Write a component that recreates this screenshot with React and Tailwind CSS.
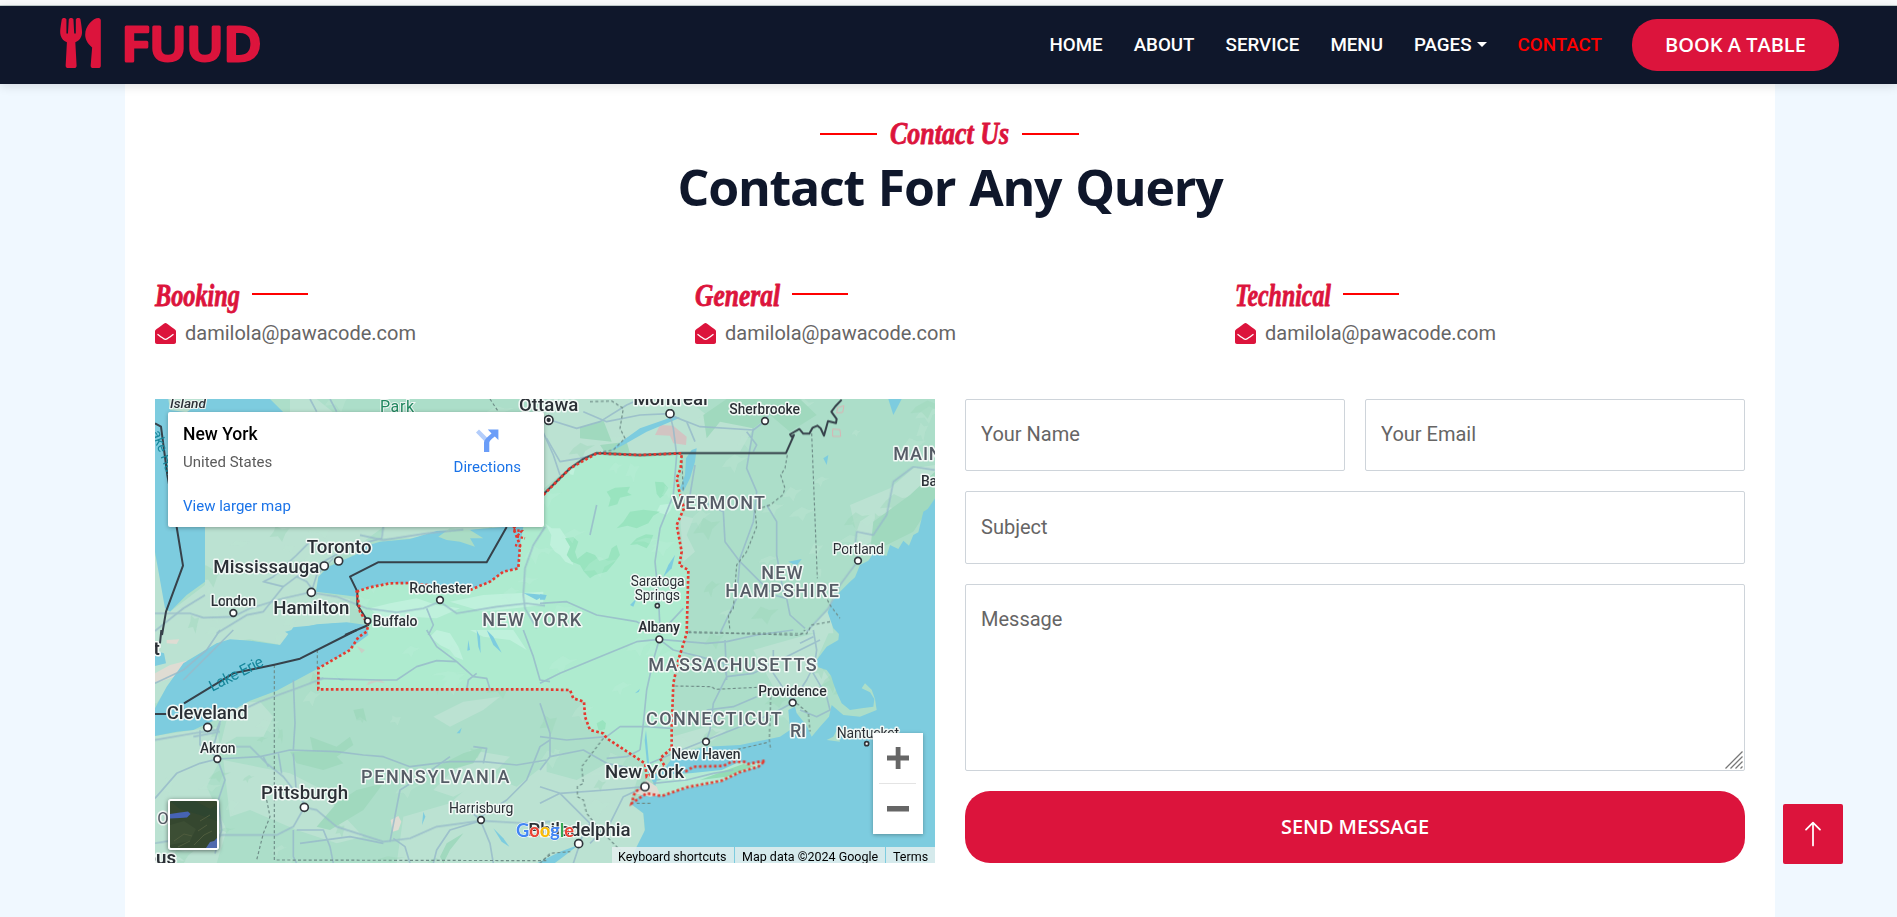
import React from "react";
import { FaUtensils, FaEnvelopeOpen } from "react-icons/fa";
import { BsArrowUp } from "react-icons/bs";

/* The map is drawn on four tiles; each tile has its own origin. */
const TILES = { a: [-15, -12], b: [1155, -12], c: [-15, 693], d: [1155, 693] };
const tile = (k) => `translate(${TILES[k][0]} ${TILES[k][1]})`;

const NY =
  "M605 578L640 566 705 553 760 552 815 558 880 566 945 573 1005 548 1045 518 1090 508 1095 438 1075 388 1120 340 1167 286 1245 208 1325 163 1455 168 1580 163 1577 208 1565 238 1573 278 1587 328 1565 378 1580 458 1573 498 1600 513 1595 703 1570 783 1555 853 1550 983 1550 1048 1515 1078 1530 1103 1475 1133 1470 1093 1355 1018 1345 1003 1305 993 1290 953 1287 908 1255 898 1245 873 1155 871 490 871 490 808 585 753 610 715 635 698 640 678 615 638Z";
const ATLANTIC =
  "M2340 298L2318 330 2305 338 2290 400 2275 408 2262 440 2245 425 2230 450 2205 438 2195 470 2155 463 2140 485 2115 498 2100 535 2085 548 2055 578 2030 610 2018 640 2035 688 2052 705 2050 723 2015 743 1985 783 1990 805 2015 813 2028 830 2035 853 2045 880 2060 913 2085 933 2120 928 2155 923 2158 900 2145 880 2120 868 2130 853 2150 872 2160 900 2165 933 2115 953 2065 948 2030 918 2022 953 1995 983 1970 1013 1955 980 1925 943 1920 923 1900 933 1905 993 1875 1013 1755 1038 1655 1043 1600 1055 1555 1073 1525 1113 1485 1133 1500 1160 1425 1213 1465 1243 1470 1293 1445 1343 1415 1413 2340 1413Z";

const PLAINS = [
  ["a", "M165 396L700 396 640 440 520 520 495 590 600 612 600 684 400 708 100 740 15 740 15 480 60 650 165 570Z"],
  ["a", "M700 396L1090 396 1000 400 880 420 780 430 690 430Z"],
  ["a", "M15 12L300 12 420 60 420 12 500 12 560 60 15 60Z"],
  ["b", "M0 12L440 12 500 60 640 100 600 170 430 172 300 180 170 172 60 240 0 290Z"],
  ["c", "M15 0L420 0 400 46 300 28 200 40 100 100 20 220 15 220Z"],
  ["c", "M15 318L130 300 200 290 215 380 170 470 230 600 200 700 15 700Z"],
  ["c", "M235 220L330 215 370 260 340 320 260 320 210 350 230 270Z"],
  ["c", "M220 390L420 430 500 470 640 620 560 640 440 600 300 540 240 560Z"],
  ["c", "M760 560L900 520 1000 430 1100 470 1190 400 1190 700 740 700Z"],
  ["c", "M850 480L930 400 960 360 1080 380 1010 450 910 500Z"],
  ["c", "M850 260L940 215 1050 200 1000 240 900 290Z"],
  ["d", "M0 420L110 450 200 400 300 420 270 520 310 550 315 620 260 700 0 700Z"],
  ["d", "M330 340L500 290 560 300 500 345 400 370Z"],
  ["d", "M640 60L780 20 870 0 830 90 870 150 790 200 700 170Z"],
  ["b", "M900 620L930 560 870 640 880 715 790 715 860 650Z"],
  ["b", "M930 330L1050 280 1120 220 1185 210 1185 280 1100 330 1030 420 960 460Z"],
  ["b", "M420 360L460 370 440 420 465 470 430 500Z"],
];

const FORESTS = [
  ["b", "M560 12L780 12 830 60 750 110 690 60 640 100 540 80 500 130 490 60Z"],
  ["b", "M120 96L190 76 215 140 120 130Z"],
  ["b", "M180 150L260 140 270 175 200 180Z"],
  ["b", "M1000 380L1110 300 1185 230 1185 310 1120 410 1040 450 990 470Z"],
  ["c", "M480 320L560 350 600 320 610 345 560 380 490 370Z"],
  ["c", "M420 365L540 360 580 400 520 420 440 400Z"],
  ["c", "M860 410L940 370 1000 350 970 400 900 420Z"],
  ["c", "M890 640L940 610 900 660 880 700 870 680Z"],
  ["c", "M610 240L640 235 650 275 630 260 620 270Z"],
  ["c", "M560 520L620 480 700 460 640 540 540 600 500 590Z"],
];

const NY_PATCHES = [
  ["b", "M200 290L225 278 270 275 262 292 275 300 240 308 232 328 205 335 212 310Z"],
  ["b", "M75 430L100 426 115 440 105 470 112 492 140 470 165 480 178 498 205 490 215 460 230 450 240 480 222 505 200 530 165 540 150 550 132 530 120 510 95 500 80 480 90 455Z"],
  ["b", "M270 350L310 344 360 350 340 362 325 385 290 400 262 392 230 400 250 380Z"],
  ["b", "M345 260L370 262 385 280 372 300 360 310 350 296Z"],
  ["b", "M290 430L318 418 340 420 330 444 320 460 292 448 270 450Z"],
  ["d", "M170 280L188 270 198 280 195 298 176 302Z"],
];
const NY_LIGHT = [
  ["b", "M15 385L35 400 60 400 80 430 110 450 90 470 100 510 76 500 60 480 45 470 30 450 34 420Z"],
  ["b", "M85 225L105 220 100 240 90 238Z"],
  ["b", "M360 330L400 325 392 345 380 360 350 350Z"],
  ["a", "M1000 600L1180 590 1180 630 1000 650 900 620Z"],
  ["c", "M860 0L900 10 925 50 940 90 915 80 900 60 870 45 840 20Z"],
  ["c", "M960 0L1090 0 1130 60 1080 30 1000 20Z"],
  ["a", "M660 640L720 625 800 610 860 630 930 640 860 670 780 665 700 680Z"],
];

const LAKES = [
  ["a", "M15 12L55 12 60 45 110 52 165 12 360 12 400 52 400 200 165 396 165 560 110 600 60 650 45 640 15 470Z"],
  ["a", "M498 590L505 545 535 515 580 495 620 478 640 455 690 440 780 432 860 408 960 404 1060 396 1180 300 1120 396 1110 450 1105 520 1060 530 1020 560 960 583 830 570 720 563 625 585 620 605 560 598Z"],
  ["a", "M405 710L500 688 590 682 650 690 655 720 560 790 390 760 420 720Z"],
  ["c", "M15 318L15 235 50 170 100 100 200 40 240 28 300 32 390 45 430 -8 560 -20 655 -5 600 55 500 118 440 150 380 182 300 212 200 268 130 300 80 305Z"],
  ["c", "M15 62L42 70 48 100 15 108Z"],
  ["b", "M455 165L470 160 465 200 450 250 430 290 420 280 435 240 438 190Z"],
  ["b", "M230 150L300 100 380 72 400 62 420 68 320 110 250 150 210 170Z"],
  ["b", "M0 598L20 600 15 614 0 614Z"],
  ["b", "M405 480L395 520 370 545 385 510Z"],
  ["b", "M270 630L290 610 280 635Z"],
  ["b", "M1045 12L1085 12 1060 60Z"],
  ["b", "M850 190L865 180 860 210Z"],
  ["b", "M745 500L785 492 770 512Z"],
  ["c", "M980 0L985 50 992 70 990 20Z"],
  ["c", "M1010 0L1030 45 1055 68 1030 20Z"],
  ["c", "M550 122L565 145 585 152 568 150Z"],
  ["c", "M955 30L960 60 952 62Z"],
  ["c", "M1030 595L1055 635 1078 650 1060 625Z"],
  ["c", "M820 545L826 560 816 585Z"],
  ["c", "M920 310L935 293 930 310Z"],
  ["a", "M1120 594L1185 600 1160 615Z"],
  ["d", "M318 300L330 430 324 430 314 330Z"],
  ["d", "M285 190L300 176 296 186Z"],
  ["d", "M-10 700L60 665 115 645 70 680 30 710Z"],
];

const ROADS = [
  ["a", "M15 655L120 655 160 668 250 665 300 640 400 610 480 592 560 605 650 640 740 652 820 640 870 620 920 655 1040 635 1130 625 1185 632"],
  ["a", "M700 396L695 430 600 455 520 500 440 545 400 575 340 560 370 545 440 480 480 440"],
  ["a", "M15 708L100 640 165 600M400 575L340 650 290 660 200 715M484 592L500 540 550 490M500 600L470 560 440 545"],
  ["a", "M1185 396L1150 450 1125 520 1120 600 1125 640 1160 700"],
  ["a", "M830 640L850 690 835 720M540 12L560 50M480 12L500 50"],
  ["a", "M630 420L700 435 830 415 940 404"],
  ["b", "M0 90L40 180 60 240M30 75L110 100 180 80 260 30 300 12M130 50L200 80 300 60 390 56M390 60L400 100 410 180 400 300 360 400 345 500 355 600 360 700"],
  ["b", "M390 60L440 80 465 140M390 60L480 95 640 105 675 78 700 30M620 110L650 150 640 170M640 100L620 220 650 290 640 380 600 490 590 610 540 715"],
  ["b", "M465 210L450 300 550 350 555 440 600 500 660 560 700 600 740 610 750 660 795 700M680 330L710 380 710 480 730 590"],
  ["b", "M1185 225L1120 215 1060 260 1040 360 1000 420 950 410 945 450 954 497 900 570 865 640 800 710"],
  ["b", "M20 130L60 200 120 190 200 170M0 625L80 620 170 660 290 680 360 715M170 330L150 420M360 715L430 640"],
  ["c", "M430 150L435 280 430 360M15 330L130 310 200 300 212 270 330 215 440 175 520 145M130 320L210 305M150 300L150 345 200 380M210 280L190 350"],
  ["c", "M15 505L80 430 150 400 202 387 330 380 420 360 560 365 640 375 700 380 780 410 900 395 1000 395 1100 405 1190 390"],
  ["c", "M202 387L225 450 205 510 215 600 195 670M230 350L300 350 350 400 400 440 463 520M340 380L355 410M385 370L395 430M430 370L440 500"],
  ["c", "M15 640L130 620 220 615 380 615 430 590 463 532 500 540 560 590 700 635 780 625 860 590 993 572 1130 580 1200 575"],
  ["c", "M430 600L430 680 440 700M440 600L520 600 540 650 550 700M720 635L750 480 830 430 900 380M993 575L1020 640 1030 700M993 572L900 600 860 660 850 700M993 560L1070 510 1130 450 1170 350 1200 330M730 625L765 650 780 700"],
  ["c", "M505 145L600 148 690 150 740 150 800 110 860 92 920 95 970 140 1010 145 1020 178M830 0L860 50 920 95M1120 0L1150 80 1170 150 1200 155M950 180L955 150 980 130M970 350L1010 355 1000 400"],
  ["c", "M15 160L100 120 170 60 210 0M100 150L180 70 250 0M450 640L600 620 700 640M993 570L930 520"],
  ["d", "M0 160L60 130 180 80 290 35 358 28 500 40 560 35 650 15 760 0M358 28L340 90 320 180 310 280 300 360M358 28L400 60 480 80 550 100 560 140 520 220 510 300 498 335M555 30L560 150"],
  ["d", "M560 140L640 130 700 100 780 60 840 30M700 60L700 130 740 190 758 218 700 250 600 290 500 330 400 370 330 400M820 0L830 60 820 130 860 200 870 240 830 260 780 240M760 210L800 150 830 90M780 40L820 20"],
  ["d", "M0 320L80 330 200 320 240 290 320 290 395 295M0 220L30 310 30 380 0 420M30 380L130 360 200 400 300 420M0 520L60 490 200 480 315 470M60 490L150 580 116 640M315 470L250 500 210 580 150 640M0 470L60 490 110 540M300 360L260 380 200 385M120 640L100 700M500 240L580 230 650 200"],
  ["d", "M340 460L440 450 520 430 580 420M350 450L400 440"],
];

const DASHED = [
  ["a", "M1020 12L1045 50"],
  ["b", "M150 20L215 18 250 40 240 100 255 130 220 165 180 172M742 180L735 220 722 240 735 280 728 300 690 330 645 345 650 395 620 470 590 510 580 640 565 660 570 708M815 115L832 550M855 600L870 630 900 670M445 710L570 714 800 716 815 690 870 680M425 180L430 290"],
  ["c", "M373 105L373 690 1190 692M502 60L502 115M350 510L360 560 340 610 320 690M1180 690L1200 675"],
  ["d", "M445 8L570 10 780 16 795 0M405 168L515 170 525 178 650 172M692 200L688 330 692 360M680 338L520 375M770 220L805 250 810 305M190 325L125 410 130 460 112 470 112 500 130 510 140 550 180 600 240 660M0 700L30 670 90 665M290 520L335 520"],
];

const BORDERS = [
  ["a", "M15 85L33 95 52 240 80 396 99 512 48 650 36 720M1070 396L1010 502 684 502 600 545 622 590 622 630 653 678 655 690 585 720"],
  ["b", "M10 298L90 220 130 192 170 174 300 180 425 174 738 174 762 120 755 125 750 118 778 102 790 116 808 116 818 98 832 92 842 100 852 122 864 78 888 84 890 72 874 50 886 34 905 14"],
  ["c", "M34 0L30 40M620 0L450 86 373 104 250 130 102 220M15 252L50 252"],
];

/* [tile, text, x, baseline, width, size, weight, color] */
const INK = "#2b3036";
const STATE = "#565c66";
const LABELS = [
  ["a", "Toronto", 470, 473, 195, 56, 500, INK],
  ["a", "Mississauga", 190, 533, 318, 56, 500, INK],
  ["a", "Hamilton", 370, 657, 228, 56, 500, INK],
  ["a", "London", 182, 634, 136, 42, 500, INK],
  ["a", "Rochester", 778, 594, 186, 42, 500, INK],
  ["a", "Buffalo", 668, 694, 134, 42, 500, INK],
  ["a", "NEW YORK", 997, 692, 296, 54, 500, STATE],
  ["a", "Ottawa", 1107, 47, 178, 56, 500, INK],
  ["b", "Montreal", 280, 29, 223, 56, 500, INK],
  ["b", "Sherbrooke", 568, 58, 212, 42, 500, INK],
  ["b", "VERMONT", 397, 342, 278, 54, 500, STATE],
  ["b", "MAINE", 1060, 195, 178, 54, 500, STATE],
  ["b", "Bangor", 1143, 272, 130, 42, 500, INK],
  ["b", "Portland", 878, 476, 154, 42, 400, INK],
  ["b", "NEW", 664, 551, 124, 54, 500, STATE],
  ["b", "HAMPSHIRE", 556, 605, 341, 54, 500, STATE],
  ["b", "Saratoga", 272, 573, 162, 42, 400, INK],
  ["b", "Springs", 284, 614, 136, 42, 400, INK],
  ["b", "Albany", 295, 712, 125, 42, 600, INK],
  ["c", "Cleveland", 50, 266, 243, 56, 500, INK],
  ["c", "Akron", 150, 368, 107, 42, 500, INK],
  ["c", "Pittsburgh", 333, 508, 261, 56, 500, INK],
  ["c", "PENNSYLVANIA", 633, 459, 445, 54, 500, STATE],
  ["c", "Harrisburg", 897, 549, 193, 42, 400, INK],
  ["c", "O", 22, 583, 32, 50, 400, STATE],
  ["d", "MASSACHUSETTS", 325, 122, 505, 54, 500, STATE],
  ["d", "CONNECTICUT", 318, 286, 407, 54, 500, STATE],
  ["d", "RI", 750, 320, 48, 54, 500, STATE],
  ["d", "Providence", 655, 199, 205, 42, 500, INK],
  ["d", "Nantucket", 890, 324, 187, 42, 400, INK],
  ["d", "New Haven", 394, 387, 208, 42, 500, INK],
  ["d", "New York", 195, 445, 238, 56, 500, INK],
  ["d", "Philadelphia", -35, 617, 307, 56, 500, INK],
];

const CITIES = [
  ["a", 566, 498, 12], ["a", 523, 513, 12], ["a", 484, 592, 12], ["a", 250, 654, 10], ["a", 870, 615, 10],
  ["a", 653, 678, 9], ["b", 390, 56, 12], ["b", 675, 78, 10], ["b", 954, 497, 10], ["b", 352, 632, 6],
  ["c", 173, 292, 12], ["c", 202, 387, 10], ["c", 463, 532, 12], ["c", 993, 570, 10], ["d", 358, 28, 10],
  ["d", 116, 641, 12], ["d", 315, 470, 12], ["d", 498, 335, 10], ["d", 758, 218, 10], ["d", 980, 341, 6],
];

/* Small irregular vegetation flecks, the same on every render. */
function flecks(count, seed) {
  let s = seed;
  const r = () => ((s = (s * 16807) % 2147483647) / 2147483647);
  const out = [];
  for (let i = 0; i < count; i++) {
    const cx = r() * 2340;
    const cy = r() * 1392;
    const w = 10 + r() * 34;
    const h = 8 + r() * 26;
    const sl = (r() - 0.3) * 30;
    out.push(
      `M${cx - w} ${cy + h * 0.4}L${cx - w * 0.6} ${cy - h * 0.3}L${cx - w * 0.3 + sl} ${cy - h}L${cx + w * 0.3 + sl} ${cy - h * 0.6}L${cx + w + sl} ${cy - h * 0.7}L${cx + w * 0.5} ${cy}L${cx + w * 0.2} ${cy + h}L${cx - w * 0.2} ${cy + h * 0.3}Z`
    );
  }
  return out.join("");
}
const LIGHT_FLECKS = flecks(130, 7717);
const DARK_FLECKS = flecks(70, 4211);

function Shapes({ list, ...rest }) {
  return (
    <g {...rest}>
      {list.map(([k, d], i) => (
        <path key={i} transform={tile(k)} d={d} />
      ))}
    </g>
  );
}

function MapArt() {
  return (
    <svg viewBox="0 0 2340 1392" className="block h-full w-full font-['Roboto',sans-serif]" preserveAspectRatio="none">
      <defs>
        <clipPath id="ny"><path d={NY} /></clipPath>
      </defs>
      <rect width="2340" height="1392" fill="#acdec9" />
      <Shapes list={PLAINS} fill="#bbe2d2" />
      <path d={LIGHT_FLECKS} fill="#bce4d3" opacity=".45" />
      <path d={DARK_FLECKS} fill="#9bd6ba" opacity=".4" />
      <Shapes list={FORESTS} fill="#a0d9be" />
      <path d={NY} fill="#aeebcf" />
      <g clipPath="url(#ny)">
        <Shapes list={NY_LIGHT} fill="#bff1dc" />
        <Shapes list={NY_PATCHES} fill="#99e4bf" />
        <path d={LIGHT_FLECKS} fill="#bff1dc" opacity=".25" />
      </g>
      <g fill="#d2c4c2">
        <path transform={tile("b")} d="M345 120L360 90 400 92 415 105 440 125 438 150 400 145 390 122Z" />
        <path transform={tile("c")} fill="#dfdcd3" d="M15 130L60 105 110 92 120 105 90 135 30 155 15 155ZM50 30L88 28 80 42 50 40ZM722 570L745 558 754 575 745 600 728 605Z" />
        <path transform={tile("c")} d="M620 48L645 60 635 70ZM655 155L690 148 705 160 680 155 650 166Z" opacity=".7" />
      </g>
      <Shapes list={LAKES} fill="#7dccdf" />
      <path d={ATLANTIC} fill="#7dccdf" />
      <g transform={tile("a")} fill="#aadcc5">
        <path d="M865 425L900 400 960 405 1000 430 960 430 975 455 930 440 890 435Z" />
      </g>
      <g transform={tile("d")}>
        <path d="M345 470L355 435 450 430 545 420 600 395 625 402 672 395 650 412 600 428 545 455 440 475 365 498 335 492Z" fill="#b5ead4" />
        <path d="M480 450L560 420 610 402 640 408 560 440Z" fill="#93dcb5" />
        <path d="M285 490L320 450 350 470 360 495 330 500Z" fill="#dfdcd3" />
        <path d="M880 320L890 300 900 335 860 330Z" fill="#acdec9" />
      </g>
      <Shapes list={ROADS} fill="none" stroke="#98bbca" strokeWidth="5" strokeLinejoin="round" opacity=".85" />
      <Shapes list={DASHED} fill="none" stroke="#6f8d88" strokeWidth="3.5" strokeDasharray="9 7" />
      <g transform={tile("b")} fill="none" stroke="#d8b4b4" strokeWidth="3">
        <path d="M893 38L912 32 908 52 890 54ZM878 102L900 104 902 124 878 124Z" />
      </g>
      <Shapes list={BORDERS} fill="none" stroke="#36414a" strokeWidth="6" strokeLinejoin="round" />
      <path d={NY} fill="none" stroke="#e53a30" strokeWidth="8" strokeDasharray="8 7" />
      <g transform={tile("d")} fill="none" stroke="#e53a30" strokeWidth="8" strokeDasharray="8 7">
        <path d="M436 425L460 410 550 408 575 395 612 395 625 402 675 392 655 410 600 426 545 452 440 472 365 498 320 490 275 520 285 485 315 470" />
      </g>
      <path transform={tile("a")} d="M1090 405L1115 408 1100 425 1125 430M1095 450L1115 455" stroke="#e53a30" strokeWidth="7" strokeDasharray="7 5" fill="none" />
      <g fill="#17879b" fontSize="46">
        <text transform="translate(172 878) rotate(-27)" textLength="176">Lake Erie</text>
        <text transform="translate(-10 100) rotate(70)" fontSize="42">ake Huron</text>
      </g>
      <text x="45" y="27" fontSize="37" fontStyle="italic" fontWeight="500" textLength="108" lengthAdjust="spacingAndGlyphs" fill={INK} stroke="#eef5f2" strokeWidth="6" paintOrder="stroke">Island</text>
      <text x="675" y="38" fontSize="48" textLength="102" fill="#21875f" stroke="#eef5f2" strokeWidth="6" paintOrder="stroke">Park</text>
      <g stroke="#f1f8f5" strokeWidth="9" strokeLinejoin="round" paintOrder="stroke">
        <text x="14" y="768" fontSize="56" fontWeight="600" fill={INK} textAnchor="end">Detroit</text>
        <text x="63" y="1396" fontSize="56" fontWeight="600" fill={INK} textAnchor="end">Columbus</text>
        {LABELS.map(([k, t, x, y, w, size, weight, color]) => (
          <text key={t + y} transform={tile(k)} x={x} y={y} textLength={w} fontSize={size} fontWeight={weight} fill={color}>
            {t}
          </text>
        ))}
      </g>
      <g fill="#fff" stroke="#30363c" strokeWidth="5">
        {CITIES.map(([k, x, y, r], i) => (
          <circle key={i} transform={tile(k)} cx={x} cy={y} r={r} />
        ))}
        <circle transform={tile("b")} cx="26" cy="75" r="13" />
        <circle transform={tile("b")} cx="26" cy="75" r="4" fill="#111" />
      </g>
      <text x="1083" y="1315" fontSize="55" textLength="174" stroke="#ffffff" strokeWidth="3" paintOrder="stroke" className="font-['Lato',sans-serif] font-bold">
        <tspan fill="#4285f4">G</tspan><tspan fill="#ea4335">o</tspan><tspan fill="#fbbc04">o</tspan><tspan fill="#4285f4">g</tspan><tspan fill="#34a853">l</tspan><tspan fill="#ea4335">e</tspan>
      </text>
    </svg>
  );
}

function MapPanel() {
  return (
    <div className="relative h-[464px] w-[780px] overflow-hidden">
      <MapArt />
      <div className="absolute left-[13px] top-[13px] flex h-[115px] w-[376px] justify-between rounded-[2px] bg-white pl-[15px] pr-[23px] shadow-[0_1px_4px_rgba(0,0,0,0.3)]">
        <div className="flex flex-col whitespace-nowrap text-[15px] leading-5">
          <span className="mt-[12px] text-[17.5px] font-medium text-black">New York</span>
          <span className="mt-[8px] text-[#5b5b5b]">United States</span>
          <span className="mt-6 text-[#1a73e8]">View larger map</span>
        </div>
        <div className="flex flex-col items-center pt-[17px] text-[15px] leading-5 text-[#1a73e8]">
          <svg viewBox="0 0 23 23" className="mb-[5px] h-[23px] w-[23px]">
            <path d="M0 3.4L3 .4 12 9.4 9.2 13Z" fill="#b3cdfb" />
            <path d="M8 23V14.5C8 11 9.5 9.5 15.5 4.4L11.8 .5H22.4V11L18.8 7.6C14.2 11.4 13.3 12.2 13.3 14.5V23Z" fill="#6a9df8" />
          </svg>
          <span>Directions</span>
        </div>
      </div>
      <div className="absolute bottom-[29px] right-3 flex h-[101px] w-[50px] flex-col items-center bg-white shadow-[0_1px_4px_rgba(0,0,0,0.3)]">
        <svg viewBox="0 0 50 101" className="h-full w-full">
          <path d="M14 22.5H22.7V14H27.5V22.5H36V27.5H27.5V36H22.7V27.5H14ZM14 73H36V78.5H14Z" fill="#666" />
          <path d="M6 50.5H43" stroke="#e4e4e4" />
        </svg>
      </div>
      <div className="absolute bottom-[13px] left-[13px] h-[51px] w-[51px] overflow-hidden rounded-[3px] border-2 border-white shadow-[0_1px_4px_rgba(0,0,0,0.5)]">
        <svg viewBox="0 0 47 47" className="block h-full w-full">
          <rect width="47" height="47" fill="#35472f" />
          <path d="M0 0H25L40 8 47 4V20L30 14 10 8Z" fill="#2e4530" />
          <path d="M0 24L14 20 26 28 20 40 0 44Z" fill="#3c4e34" />
          <path d="M0 13L10 11.5 18 10.5 20.5 13 17 16.5 10 17 0 17.5Z" fill="#4663b4" />
          <path d="M36 47L40 41 44 40 47 37V47Z" fill="#4f6aae" />
          <path d="M4 40L14 33 22 35M24 44L34 34 42 30M30 20L40 14M8 46L20 40M28 30L37 24" stroke="#4f5c3e" fill="none" />
        </svg>
      </div>
      <div className="absolute bottom-0 right-0 flex h-4 gap-px whitespace-nowrap text-[12.5px] leading-[19px] text-black">
        <span className="w-[122px] bg-[#e4eeef]/85 pl-[6px]">Keyboard shortcuts</span>
        <span className="w-[150px] bg-[#e4eeef]/85 pl-[7px]">Map data ©2024 Google</span>
        <span className="w-[49px] bg-[#e4eeef]/85 pl-[7px]">Terms</span>
      </div>
    </div>
  );
}

function Script({ children, width }) {
  return (
    <svg width={width} height="40" className="block overflow-visible font-['Liberation_Serif',serif] text-[31px] font-bold italic">
      <text x="0" y="30" textLength={width} lengthAdjust="spacingAndGlyphs" fill="#dc143c" stroke="#dc143c" strokeWidth=".8" strokeLinejoin="round">
        {children}
      </text>
    </svg>
  );
}

function Contact({ title, width }) {
  return (
    <div>
      <div className="flex h-10 items-center gap-3">
        <Script width={width}>{title}</Script>
        <span className="mb-[4px] h-[2px] w-14 bg-[#ff0000]" />
      </div>
      <div className="mt-[2px] flex h-[30px] items-center text-[20px] text-[#666565]">
        <FaEnvelopeOpen className="mr-[9px] h-[21px] w-[21px] text-[#dc143c]" />
        damilola@pawacode.com
      </div>
    </div>
  );
}

const NAV = ["HOME", "ABOUT", "SERVICE", "MENU"];
const FIELD = "block w-full rounded-[2px] border border-[#ced4da] bg-white px-[15px] pb-[2px] text-[20px] leading-[30px] text-[#666565] outline-none placeholder:text-[#666565] placeholder:opacity-100";

export default function App() {
  return (
    <div className="relative h-[917px] w-[1897px] overflow-hidden bg-[#f0f8ff] font-['Roboto',sans-serif]">
      <div className="h-[6px] border-b border-[#c3cfcf] bg-[#f9fafb]" />
      <header className="relative flex h-[78px] items-center justify-between bg-[#0f172b] pl-[60px] pr-[58px] shadow-[0_2px_10px_rgba(0,0,0,0.12)]">
        <div className="mb-1 flex items-center">
          <FaUtensils className="h-[50px] w-[41px] text-[#dc143c]" />
          <svg width="138" height="50" className="ml-[23px] block overflow-visible font-['Open_Sans',sans-serif] text-[47px] font-semibold">
            <g fill="#dc143c" stroke="#dc143c" strokeWidth="3" strokeLinejoin="round">
              <text x="-2.5" y="42.5" textLength="28" lengthAdjust="spacingAndGlyphs">F</text>
              <text x="25.5" y="42.5" textLength="37" lengthAdjust="spacingAndGlyphs">U</text>
              <text x="62.5" y="42.5" textLength="37" lengthAdjust="spacingAndGlyphs">U</text>
              <text x="99.5" y="42.5" textLength="38" lengthAdjust="spacingAndGlyphs">D</text>
            </g>
          </svg>
        </div>
        <nav className="flex items-center whitespace-nowrap text-[18.75px] font-medium text-white">
          {NAV.map((n) => (
            <span key={n} className="mr-[31px]">{n}</span>
          ))}
          <span className="mr-[31px] flex items-center">
            PAGES
            <span className="mb-[2px] ml-[5px] border-x-[5px] border-t-[5px] border-x-transparent border-t-white" />
          </span>
          <span className="mr-[30px] text-[#ff0000]">CONTACT</span>
          <button className="h-[52px] w-[207px] rounded-[25px] bg-[#dc143c] font-['Open_Sans',sans-serif] text-[20px] font-semibold">BOOK A TABLE</button>
        </nav>
      </header>

      <main className="ml-[125px] h-[833px] w-[1650px] bg-white px-[30px] pt-[29px]">
        <div className="flex h-[42px] items-center justify-center gap-[13px] pr-[2px]">
          <span className="h-[2px] w-[57px] bg-[#ff0000]" />
          <Script width={119}>Contact Us</Script>
          <span className="h-[2px] w-[57px] bg-[#ff0000]" />
        </div>
        <h1 className="mt-[2px] whitespace-nowrap text-center font-['Open_Sans',sans-serif] text-[50px] font-bold leading-[60px] tracking-[-1.2px] text-[#0f172b] [word-spacing:2px]">
          Contact For Any Query
        </h1>

        <div className="mt-[59px] grid grid-cols-3 gap-[30px]">
          <Contact title="Booking" width={85} />
          <Contact title="General" width={85} />
          <Contact title="Technical" width={96} />
        </div>

        <div className="mt-[51px] flex gap-[30px]">
          <MapPanel />
          <form className="grid h-[464px] w-[780px] grid-cols-2 grid-rows-[72px_73px_187px_72px] gap-5">
            <input className={`${FIELD} h-full`} placeholder="Your Name" />
            <input className={`${FIELD} h-full`} placeholder="Your Email" />
            <input className={`${FIELD} col-span-2 h-full`} placeholder="Subject" />
            <div className="relative col-span-2">
              <textarea className={`${FIELD} h-full resize-none pt-[19px]`} placeholder="Message" />
              <svg viewBox="0 0 18 18" className="absolute bottom-[2px] right-[2px] h-[18px] w-[18px]">
                <path d="M.5 17.5L17.5 .5M5.5 17.5L17.5 5.5M10.5 17.5L17.5 10.5M15.5 17.5L17.5 15.5" stroke="#777" strokeWidth="1.3" />
              </svg>
            </div>
            <button type="button" className="col-span-2 rounded-[25px] bg-[#dc143c] font-['Open_Sans',sans-serif] text-[20px] font-semibold text-white">SEND MESSAGE</button>
          </form>
        </div>
      </main>

      <button className="absolute left-[1783px] top-[804px] flex h-[60px] w-[60px] items-center justify-center rounded-[2px] bg-[#dc143c] text-white">
        <BsArrowUp className="h-7 w-7" />
      </button>
    </div>
  );
}
